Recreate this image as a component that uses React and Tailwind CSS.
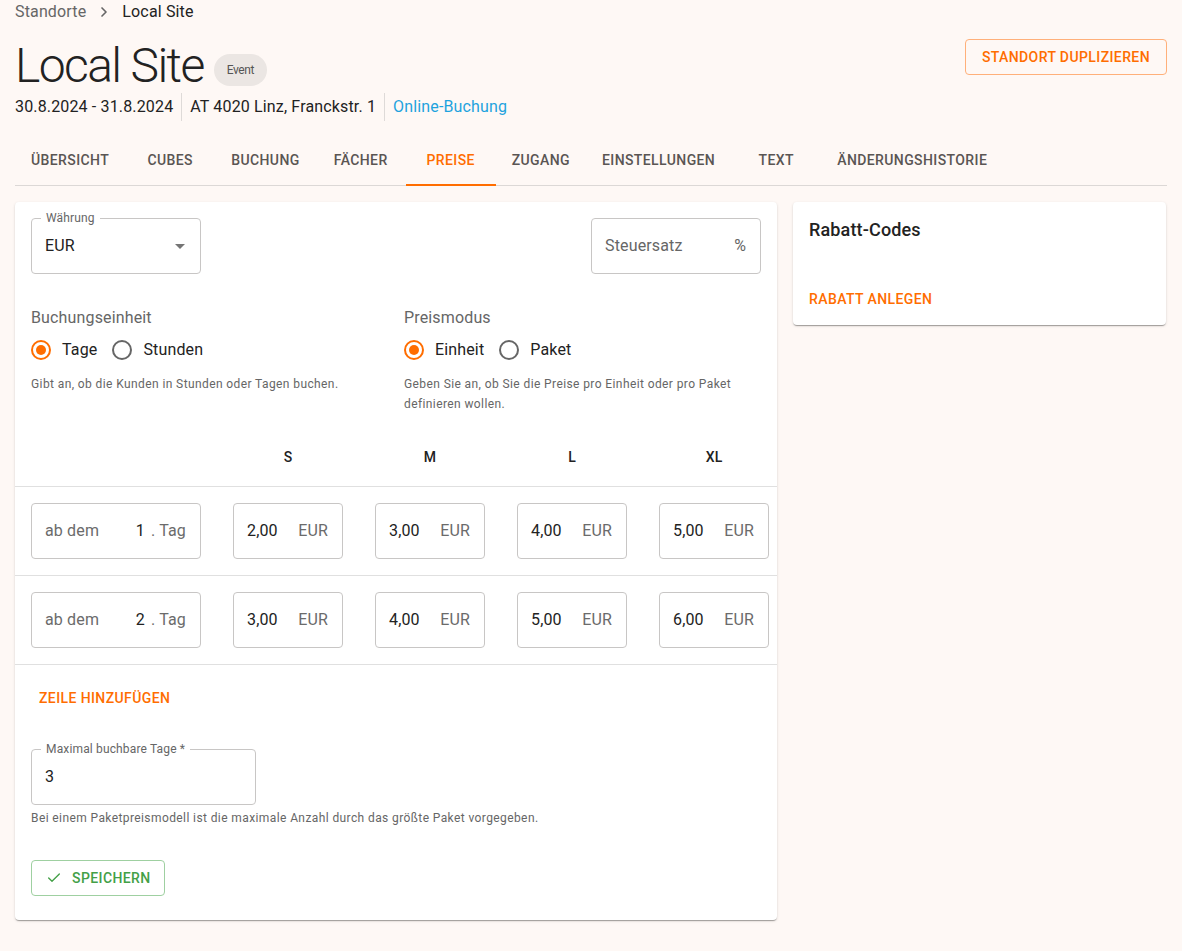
import { ChevronRight, Check } from "lucide-react";

const tabs = [
  "Übersicht",
  "Cubes",
  "Buchung",
  "Fächer",
  "Preise",
  "Zugang",
  "Einstellungen",
  "Text",
  "Änderungshistorie",
];

const sizes = ["S", "M", "L", "XL"];

const rows = [
  { day: 1, prices: ["2,00", "3,00", "4,00", "5,00"] },
  { day: 2, prices: ["3,00", "4,00", "5,00", "6,00"] },
];

const cardShadow =
  "shadow-[0_2px_1px_-1px_rgba(0,0,0,0.2),0_1px_1px_0_rgba(0,0,0,0.14),0_1px_3px_0_rgba(0,0,0,0.12)]";

const Radio = ({ checked, label }) => (
  <label className="flex items-center gap-[11px]">
    {checked ? (
      <span className="w-5 h-5 rounded-full border-2 border-[#ff6d00] flex items-center justify-center">
        <span className="w-[10px] h-[10px] rounded-full bg-[#ff6d00]" />
      </span>
    ) : (
      <span className="w-5 h-5 rounded-full border-2 border-[#666]" />
    )}
    <span className="text-base text-[#222]">{label}</span>
  </label>
);

const PriceCell = ({ value }) => (
  <div className="w-[142px] shrink-0 px-4">
    <div className="h-14 w-[110px] border border-[#c8c6c5] rounded flex items-center justify-between pl-[13px] pr-[14px] text-base">
      <span className="text-[#222]">{value}</span>
      <span className="text-[#6b6b6b]">EUR</span>
    </div>
  </div>
);

const App = () => {
  return (
    <div
      className="min-h-[951px] bg-[#fef8f5] px-[15px] text-[#222] tracking-[0.15px]"
      style={{ fontFamily: "Roboto, 'Liberation Sans', sans-serif" }}
    >
      {/* Breadcrumb */}
      <div className="flex items-center gap-[10px] pt-[1px] h-[22px] text-base">
        <span className="text-[#666]">Standorte</span>
        <ChevronRight className="w-4 h-4 text-[#666]" strokeWidth={2.5} />
        <span className="text-[#222]">Local Site</span>
      </div>

      {/* Header */}
      <div className="flex justify-between items-start">
        <div>
          <div className="flex items-center gap-[10px] mt-[18px] h-[52px]">
            <h1 className="text-[48px] font-light leading-none tracking-[-1.6px] text-[#222]">
              Local Site
            </h1>
            <span className="h-8 px-[13px] rounded-full bg-[#ebe6e3] text-xs text-[#555] flex items-center mt-2 tracking-[-0.4px]">
              Event
            </span>
          </div>
          <div className="flex items-center text-base h-[30px]">
            <span className="pr-2">30.8.2024 - 31.8.2024</span>
            <span className="w-px h-[28px] bg-[#dedad8]" />
            <span className="px-2">AT 4020 Linz, Franckstr. 1</span>
            <span className="w-px h-[28px] bg-[#dedad8]" />
            <span className="px-2 text-[#1ea3de]">Online-Buchung</span>
          </div>
        </div>
        <button className="mt-[17px] h-9 px-4 border border-[#ffb07a] rounded text-sm font-medium text-[#ff6d00] tracking-[0.4px] uppercase">
          Standort duplizieren
        </button>
      </div>

      {/* Tabs */}
      <div className="mt-[12px] flex border-b border-[#dcd8d6] h-[52px]">
        {tabs.map((t) => {
          const active = t === "Preise";
          return (
            <div
              key={t}
              className={`min-w-[90px] px-4 flex items-center justify-center relative text-sm font-medium uppercase tracking-[0.4px] ${
                active ? "text-[#ff6d00]" : "text-[#5a5553]"
              }`}
            >
              {t}
              {active && (
                <span className="absolute left-0 right-0 bottom-[-1px] h-[2px] bg-[#ff6d00]" />
              )}
            </div>
          );
        })}
      </div>

      {/* Content */}
      <div className="mt-4 flex gap-4 items-start">
        {/* Left card */}
        <div className={`w-[762px] bg-white rounded ${cardShadow} overflow-hidden pb-6`}>
          <div className="px-4 pt-4 pb-[17px]">
            <div className="flex justify-between">
              <div className="relative w-[170px] h-14 border border-[#c8c6c5] rounded flex items-center justify-between pl-[13px] pr-[14px]">
                <span className="absolute -top-[9px] left-[9px] px-[5px] bg-white text-xs text-[#666] leading-4">
                  Währung
                </span>
                <span className="text-base">EUR</span>
                <span className="w-0 h-0 border-l-[5px] border-r-[5px] border-t-[5px] border-l-transparent border-r-transparent border-t-[#757575] mr-[1px]" />
              </div>
              <div className="w-[170px] h-14 border border-[#c8c6c5] rounded flex items-center justify-between pl-[13px] pr-[14px] text-base text-[#666]">
                <span>Steuersatz</span>
                <span className="text-[#666]">%</span>
              </div>
            </div>

            <div className="mt-[32px] grid grid-cols-2 gap-4">
              <div>
                <div className="text-base text-[#666] h-6 leading-6">Buchungseinheit</div>
                <div className="flex gap-[15px] h-[38px] items-center mt-[1px]">
                  <Radio checked label="Tage" />
                  <Radio label="Stunden" />
                </div>
                <div className="text-xs text-[#666] leading-5 mt-[5px] tracking-[0.4px]">
                  Gibt an, ob die Kunden in Stunden oder Tagen buchen.
                </div>
              </div>
              <div>
                <div className="text-base text-[#666] h-6 leading-6">Preismodus</div>
                <div className="flex gap-[15px] h-[38px] items-center mt-[1px]">
                  <Radio checked label="Einheit" />
                  <Radio label="Paket" />
                </div>
                <div className="text-xs text-[#666] leading-5 mt-[5px] tracking-[0.4px]">
                  Geben Sie an, ob Sie die Preise pro Einheit oder pro Paket
                  definieren wollen.
                </div>
              </div>
            </div>
          </div>

          {/* Price table */}
          <div>
            <div className="flex h-[56px] items-center pb-1 border-b border-[#e0e0e0]">
              <div className="w-[202px] shrink-0" />
              {sizes.map((s) => (
                <div
                  key={s}
                  className="w-[142px] shrink-0 text-center text-sm font-medium"
                >
                  {s}
                </div>
              ))}
            </div>
            {rows.map((r) => (
              <div
                key={r.day}
                className="flex h-[89px] items-center border-b border-[#e0e0e0]"
              >
                <div className="w-[202px] shrink-0 pl-4">
                  <div className="h-14 w-[170px] border border-[#c8c6c5] rounded flex items-center pl-[13px] pr-[14px] text-base">
                    <span className="text-[#6b6b6b]">ab dem</span>
                    <span className="ml-auto text-[#222]">{r.day}</span>
                    <span className="ml-[6px] text-[#6b6b6b]">. Tag</span>
                  </div>
                </div>
                {r.prices.map((p, i) => (
                  <PriceCell key={i} value={p} />
                ))}
              </div>
            ))}
          </div>

          <div className="px-4">
            <button className="mt-[15px] h-9 px-2 text-sm font-medium uppercase tracking-[0.4px] text-[#ff6d00]">
              Zeile hinzufügen
            </button>

            <div className="relative mt-[33px] w-[225px] h-14 border border-[#c8c6c5] rounded flex items-center pl-[13px] pr-[14px]">
              <span className="absolute -top-[9px] left-[9px] px-[5px] bg-white text-xs text-[#666] leading-4">
                Maximal buchbare Tage *
              </span>
              <span className="text-base">3</span>
            </div>
            <div className="text-xs text-[#666] mt-[3px] leading-5 tracking-[0.4px]">
              Bei einem Paketpreismodell ist die maximale Anzahl durch das größte
              Paket vorgegeben.
            </div>

            <button className="mt-[32px] h-[36px] w-[134px] border border-[#9fd0a1] rounded flex items-center gap-[10px] pl-[14px] text-sm font-medium uppercase tracking-[0.4px] text-[#43a047]">
              <Check className="w-[16px] h-[16px]" strokeWidth={2} />
              Speichern
            </button>
          </div>
        </div>

        {/* Right card */}
        <div className={`w-[373px] bg-white rounded ${cardShadow} px-4 pt-4 pb-4`}>
          <div className="text-lg font-medium leading-6">Rabatt-Codes</div>
          <div className="mt-[47px] leading-5 text-sm font-medium uppercase tracking-[0.4px] text-[#ff6d00]">
            Rabatt anlegen
          </div>
        </div>
      </div>
    </div>
  );
};

export default App;
